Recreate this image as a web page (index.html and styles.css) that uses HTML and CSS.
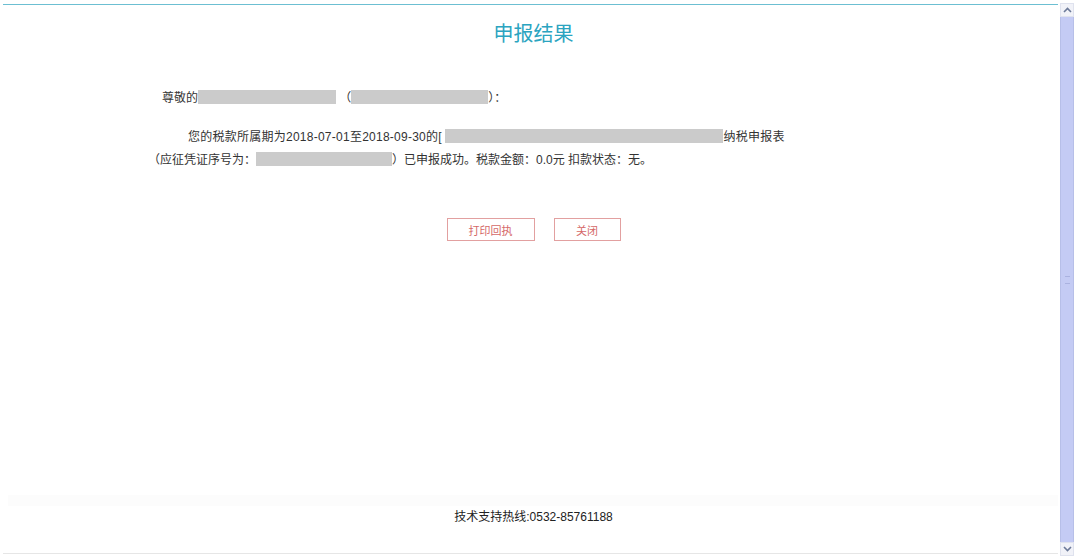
FILE: index.html
```html
<!DOCTYPE html>
<html lang="zh-CN">
  <head>
    <meta charset="UTF-8" />
    <meta name="viewport" content="width=device-width, initial-scale=1.0" />
    <link rel="stylesheet" href="styles.css">
  </head>
  <body>
    <div class="window">
      <div class="page">
        <div class="frame">
          <h1 class="title">申报结果</h1>
          <p class="greeting">
            尊敬的<span class="mask mask-name"></span> （<span class="mask mask-id"></span>）：
          </p>
          <p class="notice">
            <span class="indent">您的税款所属期为2018-07-01至2018-09-30的[ <span class="mask mask-tax"></span>纳税申报表</span><br>
            （应征凭证序号为：<span class="mask mask-no"></span>）已申报成功。税款金额：0.0元 扣款状态：无。
          </p>
          <div class="actions">
            <button class="btn btn-print">打印回执</button>
            <button class="btn btn-close">关闭</button>
          </div>
          <div class="spacer"></div>
          <div class="band"></div>
          <p class="footer">技术支持热线:0532-85761188</p>
        </div>
      </div>
      <div class="scrollbar">
        <div class="arrow">
          <svg width="9" height="6" viewBox="0 0 9 6"><path d="M1 5 L4.5 1.5 L8 5" fill="none" stroke="#6c7a99" stroke-width="1.6"/></svg>
        </div>
        <div class="track"><span class="grip"></span></div>
        <div class="arrow">
          <svg width="9" height="6" viewBox="0 0 9 6"><path d="M1 1 L4.5 4.5 L8 1" fill="none" stroke="#6c7a99" stroke-width="1.6"/></svg>
        </div>
      </div>
    </div>
  </body>
</html>
```

FILE: styles.css
```css
* {
  margin: 0;
  padding: 0;
  box-sizing: border-box;
}
body {
  background: #fff;
  font-family: "Liberation Sans", "Noto Sans CJK SC", sans-serif;
  color: #333;
}
.window {
  display: flex;
  width: 1080px;
  height: 558px;
  overflow: hidden;
}
.page {
  flex: 1;
  display: flex;
  flex-direction: column;
  padding: 4px 2px 4px 3px;
}
.frame {
  flex: 1;
  display: flex;
  flex-direction: column;
  border-top: 1px solid #6cbfd2;
  border-bottom: 1px solid #e6e6e6;
}
.title {
  margin-top: 15px;
  padding-left: 6px;
  text-align: center;
  font-size: 20px;
  font-weight: normal;
  line-height: 28px;
  color: #2ba4c0;
}
.greeting {
  margin-top: 40px;
  padding-left: 159px;
  font-size: 12px;
  line-height: 20px;
}
.notice {
  margin-top: 18px;
  padding-left: 145px;
  font-size: 12px;
  line-height: 23px;
}
.indent {
  padding-left: 40px;
  letter-spacing: 0.25px;
}
.mask {
  display: inline-block;
  height: 14px;
  background: #cbcbcb;
  vertical-align: -2px;
}
.mask-name {
  width: 138px;
}
.mask-id {
  width: 137px;
}
.mask-tax {
  width: 278px;
}
.mask-no {
  width: 136px;
}
.actions {
  display: flex;
  justify-content: center;
  gap: 19px;
  margin-top: 46px;
  padding-left: 6px;
}
.btn {
  height: 23px;
  background: #fff;
  border: 1px solid #e2a0a0;
  color: #d56868;
  font-family: "Liberation Sans", "Noto Sans CJK SC", sans-serif;
  font-size: 11px;
}
.btn-print {
  width: 88px;
}
.btn-close {
  width: 67px;
}
.spacer {
  flex: 1;
}
.band {
  height: 11px;
  margin-left: 5px;
  background: #fcfcfc;
}
.footer {
  margin-top: 1px;
  margin-bottom: 26px;
  padding-left: 6px;
  text-align: center;
  font-size: 12px;
  line-height: 20px;
  color: #222;
}
.scrollbar {
  width: 20px;
  display: flex;
  flex-direction: column;
  padding: 3px 6px 2px 0;
}
.arrow {
  height: 14px;
  display: flex;
  align-items: center;
  justify-content: center;
  background: #f1f2f8;
  border: 1px solid #dfe2ee;
}
.track {
  flex: 1;
  display: flex;
  align-items: center;
  justify-content: center;
  background: #c4cbf4;
  border-left: 1px solid #b7bfe8;
  border-right: 1px solid #b7bfe8;
}
.grip {
  width: 5px;
  height: 8px;
  border-top: 1px solid #aab2e0;
  border-bottom: 1px solid #aab2e0;
}
```
